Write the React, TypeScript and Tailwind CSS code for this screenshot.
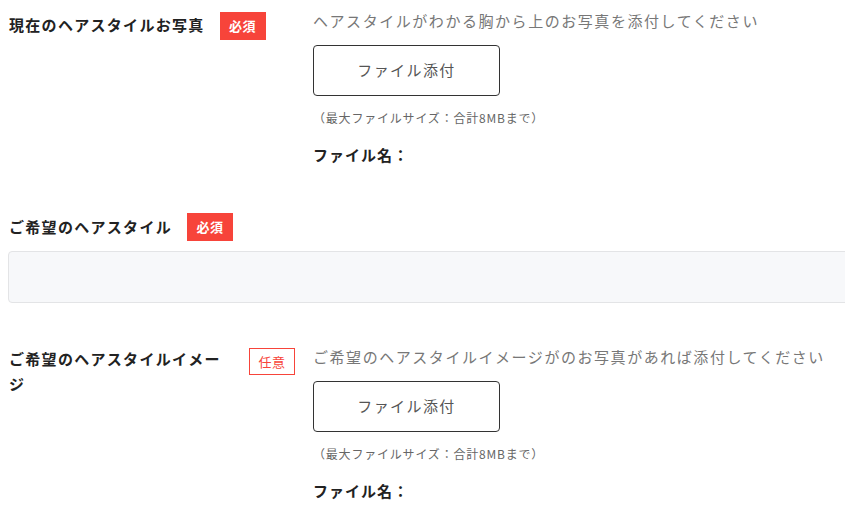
import React from "react";

const font = { fontFamily: '"Noto Sans CJK JP", "Noto Sans", sans-serif' };

function Required() {
  return (
    <span className="shrink-0 inline-flex items-center justify-center w-[46px] h-[28px] bg-[#f7443a] text-white text-[13px] font-bold tracking-[0.5px]">
      必須
    </span>
  );
}

function Optional() {
  return (
    <span className="shrink-0 inline-flex items-center justify-center w-[46px] h-[27px] border border-[#f7443a] text-[#f7443a] text-[13px] tracking-[0.5px]">
      任意
    </span>
  );
}

function Uploader({ hint, top }: { hint: string; top: string }) {
  return (
    <div className="flex flex-col items-start">
      <div className="text-[15px] leading-[24px] text-[#777] tracking-[1.55px]">{hint}</div>
      <button
        className={`${top} w-[187px] h-[51px] border border-[#333] rounded-[4px] bg-white text-[15px] text-[#555] tracking-[1.4px] flex items-center justify-center`}
      >
        ファイル添付
      </button>
      <div className="mt-[13px] text-[12px] leading-[18px] text-[#666] tracking-[0.8px]">
        （最大ファイルサイズ：合計8MBまで）
      </div>
      <div className="mt-[16px] text-[15px] leading-[24px] font-bold text-[#222] tracking-[1px]">
        ファイル名：
      </div>
    </div>
  );
}

export default function App() {
  return (
    <div className="w-[845px] h-[522px] overflow-hidden bg-white" style={font}>
      <div className="pl-[9px]">
        {/* Row 1 */}
        <div className="flex pt-[9px]">
          <div className="w-[304px] shrink-0 flex items-start">
            <div className="mt-[3px] max-w-[226px] text-[15px] leading-[25px] font-bold text-[#222] tracking-[1.3px]">
              現在のヘアスタイルお写真
            </div>
            <div className="ml-[15px] mt-[3px]">
              <Required />
            </div>
          </div>
          <Uploader hint="ヘアスタイルがわかる胸から上のお写真を添付してください" top="mt-[12px]" />
        </div>

        {/* Row 2 */}
        <div className="mt-[46px]">
          <div className="flex items-start">
            <div className="text-[15px] leading-[27px] font-bold text-[#222] tracking-[1.3px]">
              ご希望のヘアスタイル
            </div>
            <div className="ml-[15px]">
              <Required />
            </div>
          </div>
          <div className="mt-[10px] -ml-[1px] w-[900px] h-[52px] bg-[#f7f8fa] border border-[#e3e4e6] rounded-[4px]" />
        </div>

        {/* Row 3 */}
        <div className="flex mt-[42px]">
          <div className="w-[304px] shrink-0 flex items-start">
            <div className="mt-[1px] w-[226px] text-[15px] leading-[25px] font-bold text-[#222] tracking-[1.3px]">
              ご希望のヘアスタイルイメージ
            </div>
            <div className="ml-[14px] mt-[3px]">
              <Optional />
            </div>
          </div>
          <Uploader hint="ご希望のヘアスタイルイメージがのお写真があれば添付してください" top="mt-[12px]" />
        </div>
      </div>
    </div>
  );
}
